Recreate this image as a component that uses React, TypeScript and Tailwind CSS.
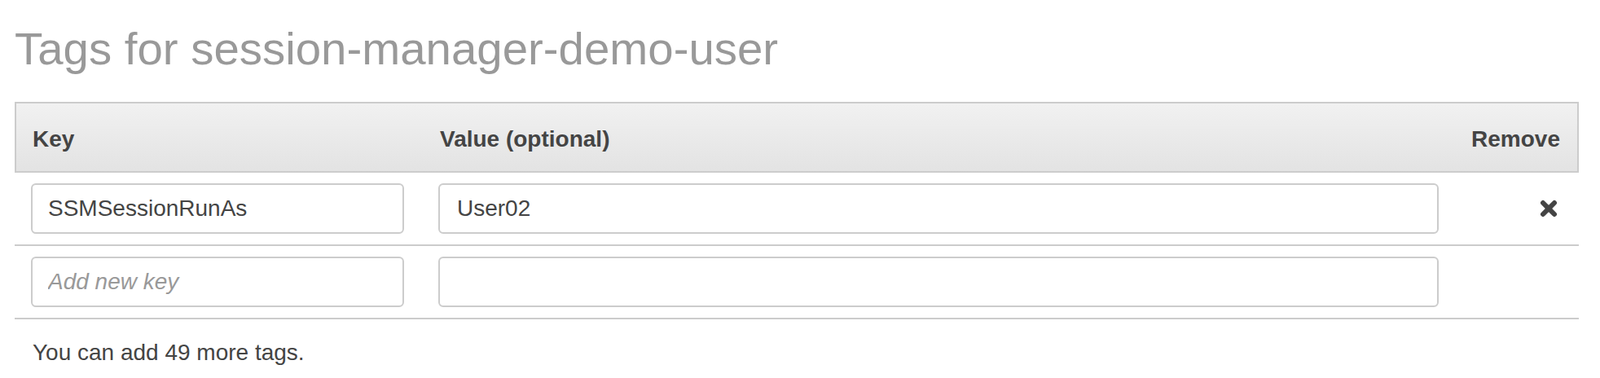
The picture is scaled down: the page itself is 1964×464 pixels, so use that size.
import React from "react";

const font = { fontFamily: '"Liberation Sans", Arial, Helvetica, sans-serif' };

function RemoveIcon() {
  return (
    <svg width="22" height="22" viewBox="0 0 22 22" className="block">
      <line x1="4" y1="4" x2="18" y2="18" stroke="#444" strokeWidth="6" strokeLinecap="round" />
      <line x1="18" y1="4" x2="4" y2="18" stroke="#444" strokeWidth="6" strokeLinecap="round" />
    </svg>
  );
}

function TagRow({ tagKey, value, removable }: { tagKey: string; value: string; removable?: boolean }) {
  return (
    <div className="flex h-[90px] items-center border-b-2 border-[#cccccc] pl-[20px] pr-[22px]">
      <input
        defaultValue={tagKey}
        placeholder="Add new key"
        className="h-[62px] w-[458px] rounded-[6px] border-2 border-[#cccccc] bg-white pl-[19px] text-[28px] text-[#444444] outline-none placeholder:italic placeholder:text-[#999999]"
        style={font}
      />
      <input
        defaultValue={value}
        className="ml-[42px] h-[62px] min-w-0 flex-1 rounded-[6px] border-2 border-[#cccccc] bg-white pl-[21px] text-[28px] text-[#444444] outline-none"
        style={font}
      />
      <div className="flex w-[150px] justify-end pr-[4px]">
        {removable && (
          <button className="p-0">
            <RemoveIcon />
          </button>
        )}
      </div>
    </div>
  );
}

export default function App() {
  return (
    <div className="min-h-screen bg-white px-[18px]" style={font}>
      <h1 className="pt-[28px] text-[56.4px] leading-[64px] font-normal text-[#999999]">
        Tags for session-manager-demo-user
      </h1>

      <div className="mt-[33px] w-[1920px]">
        <div className="flex h-[87px] items-center border-2 border-[#cccccc] bg-gradient-to-b from-[#f1f1f1] to-[#e3e3e3] pt-[4px] pl-[20px] pr-[21px] text-[28px] font-bold text-[#444444]">
          <div className="w-[500px]">Key</div>
          <div className="flex-1">Value (optional)</div>
          <div>Remove</div>
        </div>
        <TagRow tagKey="SSMSessionRunAs" value="User02" removable />
        <TagRow tagKey="" value="" />
      </div>

      <p className="pt-[25px] pl-[22px] text-[28px] leading-[32px] text-[#444444]">You can add 49 more tags.</p>
    </div>
  );
}
